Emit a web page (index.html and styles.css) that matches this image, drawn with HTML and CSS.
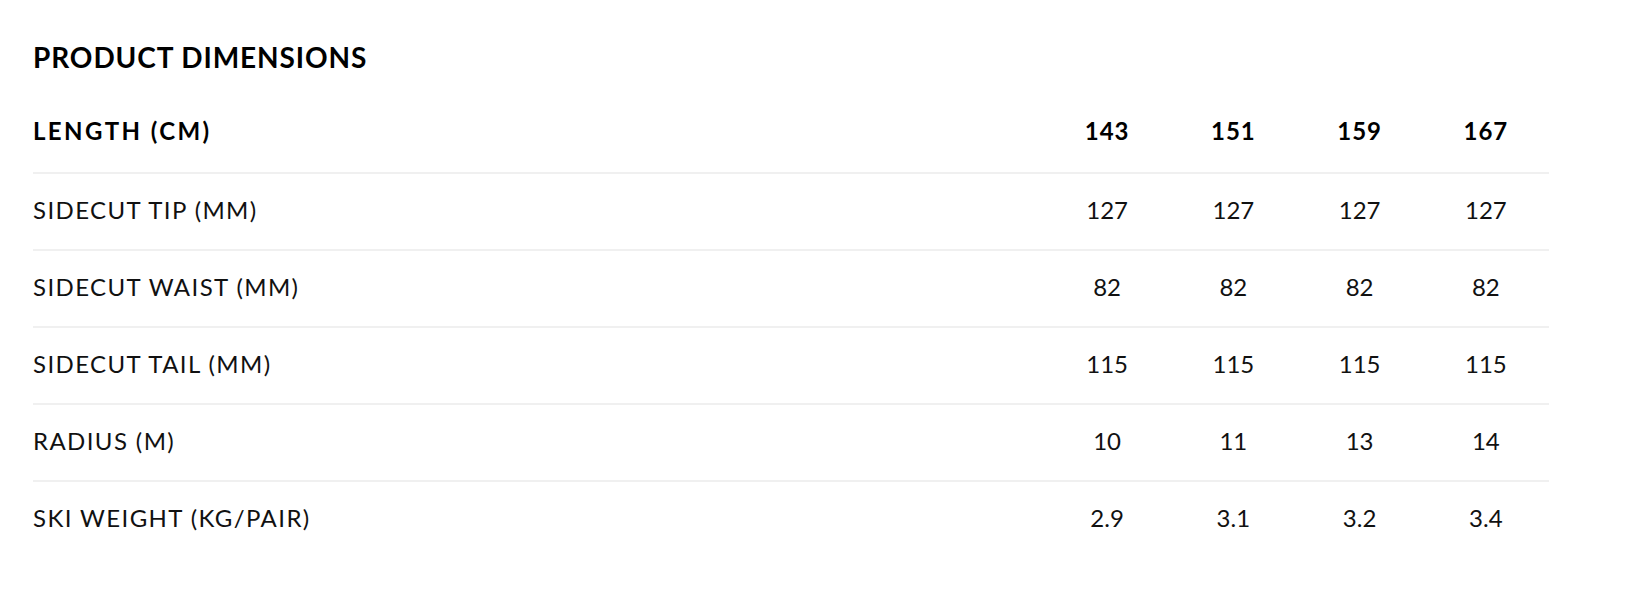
FILE: index.html
```html
<!DOCTYPE html>
<html lang="en">
<head>
<meta charset="utf-8">
<title>Product Dimensions</title>
<link rel="stylesheet" href="styles.css">
</head>
<body>
<section class="dims">
  <h2 class="dims-title">PRODUCT DIMENSIONS</h2>
  <table class="dims-table">
    <colgroup>
      <col class="col-label">
      <col class="col-size">
      <col class="col-size">
      <col class="col-size">
      <col class="col-size">
    </colgroup>
    <thead>
      <tr>
        <th class="label">LENGTH (CM)</th>
        <th>143</th>
        <th>151</th>
        <th>159</th>
        <th>167</th>
      </tr>
    </thead>
    <tbody>
      <tr>
        <td class="label">SIDECUT TIP (MM)</td>
        <td>127</td><td>127</td><td>127</td><td>127</td>
      </tr>
      <tr>
        <td class="label">SIDECUT WAIST (MM)</td>
        <td>82</td><td>82</td><td>82</td><td>82</td>
      </tr>
      <tr>
        <td class="label">SIDECUT TAIL (MM)</td>
        <td>115</td><td>115</td><td>115</td><td>115</td>
      </tr>
      <tr>
        <td class="label">RADIUS (M)</td>
        <td>10</td><td>11</td><td>13</td><td>14</td>
      </tr>
      <tr>
        <td class="label">SKI WEIGHT (KG/PAIR)</td>
        <td>2.9</td><td>3.1</td><td>3.2</td><td>3.4</td>
      </tr>
    </tbody>
  </table>
</section>
</body>
</html>
```
FILE: styles.css
```css
html, body {
  margin: 0;
  padding: 0;
  background: #ffffff;
}

body {
  font-family: Lato, "Liberation Sans", sans-serif;
  color: #111111;
}

.dims {
  padding: 39px 99px 0 33px;
}

.dims-title {
  margin: 0 0 16px 0;
  font-size: 28px;
  line-height: 36px;
  font-weight: 700;
  letter-spacing: 0.9px;
  color: #000000;
}

.dims-table {
  width: 1516px;
  border-collapse: collapse;
  table-layout: fixed;
}

.col-label {
  width: 1011px;
}

.dims-table th,
.dims-table td {
  padding: 0;
  text-align: center;
  vertical-align: middle;
  font-size: 24px;
  line-height: 30px;
  letter-spacing: 0;
}

.dims-table th {
  height: 79px;
  padding-bottom: 2px;
  font-weight: 700;
  letter-spacing: 1px;
  color: #000000;
  border-bottom: 2px solid #f0f0f0;
}

.dims-table td {
  height: 72px;
  padding-bottom: 3px;
  font-weight: 400;
  border-bottom: 2px solid #f0f0f0;
}

.dims-table tbody tr:last-child td {
  border-bottom: none;
}

.dims-table .label {
  text-align: left;
  letter-spacing: 1.4px;
}

.dims-table th.label {
  letter-spacing: 2.4px;
}
```
